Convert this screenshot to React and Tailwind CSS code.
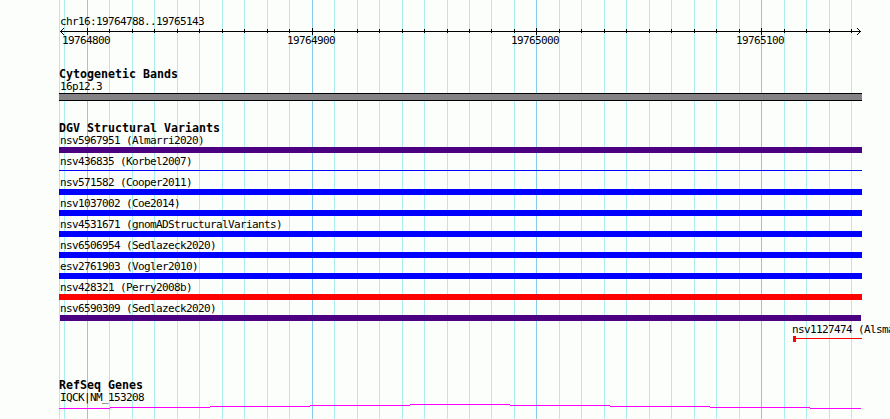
import React from 'react'

const START = 19764788
const END = 19765143
const PX_PER_BP = 800 / 356

const toX = (bp) => Math.floor(60.5 + (bp - START) * PX_PER_BP)

const TICKS = []
for (let bp = Math.ceil(START / 10) * 10; bp <= END; bp += 10) {
  TICKS.push({ bp, x: toX(bp), major: bp % 100 === 0 })
}

const VARIANTS = [
  { label: 'nsv5967951 (Almarri2020)', bar: 'h-1.5 bg-[#4b0082]' },
  { label: 'nsv436835 (Korbel2007)', bar: 'mt-[2px] mb-[3px] h-px bg-[#0000ff]' },
  { label: 'nsv571582 (Cooper2011)', bar: 'h-1.5 bg-[#0000ff]' },
  { label: 'nsv1037002 (Coe2014)', bar: 'h-1.5 bg-[#0000ff]' },
  { label: 'nsv4531671 (gnomADStructuralVariants)', bar: 'h-1.5 bg-[#0000ff]' },
  { label: 'nsv6506954 (Sedlazeck2020)', bar: 'h-1.5 bg-[#0000ff]' },
  { label: 'esv2761903 (Vogler2010)', bar: 'h-1.5 bg-[#0000ff]' },
  { label: 'nsv428321 (Perry2008b)', bar: 'h-1.5 bg-[#ff0000]' },
  { label: 'nsv6590309 (Sedlazeck2020)', bar: 'mx-px h-1.5 bg-[#4b0082]' },
]

function Grid() {
  return (
    <svg className="absolute inset-0" width="890" height="419" shapeRendering="crispEdges">
      <rect x="59" y="0" width="1" height="419" fill="#aceeec" />
      {TICKS.map((t) => (
        <rect key={t.bp} x={t.x} y="0" width="1" height="419" fill={t.major ? '#84ceec' : '#aceeec'} />
      ))}
    </svg>
  )
}

function Ruler() {
  return (
    <svg className="block" width="890" height="20" viewBox="0 28 890 20">
      <g shapeRendering="crispEdges">
        <rect x="60" y="31" width="801" height="1" />
        {TICKS.filter((t) => t.x > 64).map((t) => (
          <rect key={t.bp} x={t.x} y={t.major ? 28 : 29} width="1" height={t.major ? 7 : 4} />
        ))}
        {[1, 2, 3].map((i) => (
          <g key={i}>
            <rect x={60 + i} y={31 - i} width="1" height="1" />
            <rect x={60 + i} y={31 + i} width="1" height="1" />
            <rect x={860 - i} y={31 - i} width="1" height="1" />
            <rect x={860 - i} y={31 + i} width="1" height="1" />
          </g>
        ))}
      </g>
      {TICKS.filter((t) => t.major).map((t) => (
        <text key={t.bp} x={t.x - 25} y="44">{t.bp}</text>
      ))}
    </svg>
  )
}

function Heading({ children }) {
  return (
    <h2 className="ml-[59px] h-3 leading-[13px] text-[11.63px] tracking-normal font-bold">{children}</h2>
  )
}

function Label({ children }) {
  return <div className="h-[15px] pl-px leading-[17px]">{children}</div>
}

// Gene arc, drawn as one-pixel steps
function GeneLine() {
  const xs = [59, 110, 210, 310, 410, 510, 610, 710, 810, 861]
  const ys = [4, 3, 2, 1, 0, 1, 2, 3, 4]
  return (
    <svg className="block" width="890" height="5" shapeRendering="crispEdges">
      {ys.map((y, i) => (
        <rect key={i} x={xs[i]} y={y} width={xs[i + 1] - xs[i]} height="1" fill="#ff00ff" />
      ))}
    </svg>
  )
}

export default function App() {
  return (
    <div className="relative w-[890px] h-[419px] overflow-hidden bg-[#fcfefc] text-black whitespace-pre font-['DejaVu_Sans_Mono',monospace] text-[11px] tracking-[-0.622px]">
      <Grid />
      <div className="relative flex flex-col">
        <div className="ml-[60px] h-7 pt-[13px] leading-[17px]">chr16:19764788..19765143</div>
        <Ruler />

        <section className="mt-5">
          <Heading>Cytogenetic Bands</Heading>
          <div className="ml-[59px] w-[803px]">
            <div className="h-[13px] pl-px leading-[13px]">16p12.3</div>
            <div className="h-2 border-y border-black bg-[#848284]" />
          </div>
        </section>

        <section className="mt-[21px]">
          <Heading>DGV Structural Variants</Heading>
          <div className="-mt-0.5 ml-[59px] w-[803px]">
            {VARIANTS.map((v) => (
              <div key={v.label} className="h-[21px]">
                <Label>{v.label}</Label>
                <div className={v.bar} />
              </div>
            ))}
            {/* label runs off the right edge of the panel */}
            <div className="ml-[732px] h-[21px]">
              <Label>nsv1127474 (Alsmadi2014)</Label>
              <div className="ml-0.5 flex h-1.5">
                <div className="w-[3px] bg-[#ff0000]" />
                <div className="mt-[2px] h-px flex-1 bg-[#ff0000]" />
              </div>
            </div>
          </div>
        </section>

        <section className="mt-[37px]">
          <Heading>RefSeq Genes</Heading>
          <div className="ml-[60px] h-[13px] leading-[13px]">IQCK|NM_153208</div>
          <GeneLine />
        </section>
      </div>
    </div>
  )
}
